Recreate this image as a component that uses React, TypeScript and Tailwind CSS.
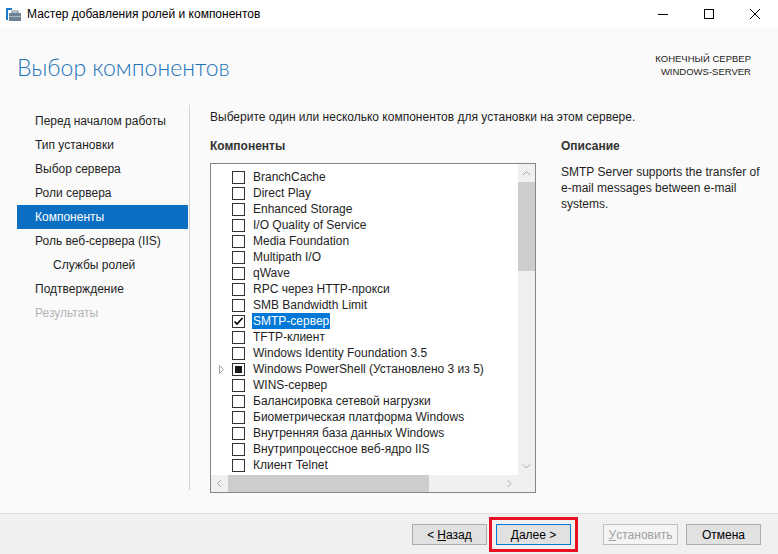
import React from "react";

type Item = {
  label: string;
  checked?: boolean;
  partial?: boolean;
  selected?: boolean;
  expandable?: boolean;
};

const items: Item[] = [
  { label: "BranchCache" },
  { label: "Direct Play" },
  { label: "Enhanced Storage" },
  { label: "I/O Quality of Service" },
  { label: "Media Foundation" },
  { label: "Multipath I/O" },
  { label: "qWave" },
  { label: "RPC через HTTP-прокси" },
  { label: "SMB Bandwidth Limit" },
  { label: "SMTP-сервер", checked: true, selected: true },
  { label: "TFTP-клиент" },
  { label: "Windows Identity Foundation 3.5" },
  { label: "Windows PowerShell (Установлено 3 из 5)", partial: true, expandable: true },
  { label: "WINS-сервер" },
  { label: "Балансировка сетевой нагрузки" },
  { label: "Биометрическая платформа Windows" },
  { label: "Внутренняя база данных Windows" },
  { label: "Внутрипроцессное веб-ядро IIS" },
  { label: "Клиент Telnet" },
];

const nav = [
  { label: "Перед началом работы" },
  { label: "Тип установки" },
  { label: "Выбор сервера" },
  { label: "Роли сервера" },
  { label: "Компоненты", active: true },
  { label: "Роль веб-сервера (IIS)" },
  { label: "Службы ролей", sub: true },
  { label: "Подтверждение" },
  { label: "Результаты", disabled: true },
];

function Chevron({ dir }: { dir: "up" | "down" | "left" | "right" }) {
  const d = {
    up: "M1 5 L4.5 1.5 L8 5",
    down: "M1 1.5 L4.5 5 L8 1.5",
    left: "M5 1 L1.5 4.5 L5 8",
    right: "M1.5 1 L5 4.5 L1.5 8",
  }[dir];
  const vert = dir === "up" || dir === "down";
  return (
    <svg width={vert ? 9 : 7} height={vert ? 7 : 9} viewBox={vert ? "0 0 9 7" : "0 0 7 9"}>
      <path d={d} fill="none" stroke="#a6a6a6" strokeWidth="1" />
    </svg>
  );
}

function CheckBox({ checked, partial }: { checked?: boolean; partial?: boolean }) {
  return (
    <div className="w-[13px] h-[13px] border border-[#333333] bg-white flex items-center justify-center shrink-0">
      {checked && (
        <svg width="11" height="11" viewBox="0 0 11 11">
          <path d="M1.5 5.5 L4 8 L9.5 2" fill="none" stroke="#000" strokeWidth="1.6" />
        </svg>
      )}
      {partial && <div className="w-[7px] h-[7px] bg-[#1a1a1a]" />}
    </div>
  );
}

function Btn({ children, focused, disabled }: { children: React.ReactNode; focused?: boolean; disabled?: boolean }) {
  return (
    <div
      className={`w-[75px] h-[21px] flex items-center justify-center text-[12px] border ${
        disabled
          ? "bg-[#f4f4f4] border-[#bfbfbf] text-[#a0a0a0]"
          : focused
          ? "bg-[#e1e1e1] border-[#0078d7] text-[#000]"
          : "bg-[#e1e1e1] border-[#adadad] text-[#000]"
      }`}
    >
      {children}
    </div>
  );
}

export default function App() {
  return (
    <div className="w-[778px] h-[554px] flex flex-col bg-[#fafafa] text-[#1e1e1e] font-['Liberation_Sans',Arial,sans-serif] overflow-hidden">
      {/* Title bar */}
      <div className="h-[28px] bg-white flex items-center shrink-0">
        <svg className="ml-[6px]" width="15" height="13" viewBox="0 0 15 13">
          <rect x="0" y="0" width="6" height="2" fill="#1a7bd0" />
          <rect x="0" y="0" width="2" height="12" fill="#1a7bd0" />
          <rect x="3" y="5" width="12" height="8" fill="#6f8194" />
          <rect x="6" y="3" width="6" height="2" fill="none" stroke="#6f8194" strokeWidth="1" />
          <rect x="3" y="8" width="12" height="1" fill="#a9b6c3" />
        </svg>
        <span className="ml-[6px] text-[12px] text-black">Мастер добавления ролей и компонентов</span>
        <div className="ml-auto flex items-center">
          <div className="w-[46px] h-[28px] flex items-center justify-center">
            <div className="w-[10px] h-[1px] bg-black" />
          </div>
          <div className="w-[46px] h-[28px] flex items-center justify-center">
            <div className="w-[10px] h-[10px] border border-black" />
          </div>
          <div className="w-[46px] h-[28px] flex items-center justify-center">
            <svg width="10" height="10" viewBox="0 0 10 10">
              <path d="M0 0 L10 10 M10 0 L0 10" stroke="#000" strokeWidth="1" />
            </svg>
          </div>
        </div>
      </div>

      {/* Header */}
      <div className="h-[77px] shrink-0 flex justify-between">
        <div className="pl-[17px] pt-[23px] text-[23px] leading-[32px] font-light text-[#1b74b9] font-['Lato',sans-serif]">
          Выбор компонентов
        </div>
        <div className="pr-[27px] pt-[24px] text-[9.5px] leading-[13px] text-right text-[#1e1e1e]">
          <div>КОНЕЧНЫЙ СЕРВЕР</div>
          <div>WINDOWS-SERVER</div>
        </div>
      </div>

      {/* Body */}
      <div className="flex-1 flex items-start">
        <div className="w-[190px] h-[385px] border-r border-[#d4d4d4] pt-[4px] shrink-0">
          {nav.map((n) => (
            <div
              key={n.label}
              className={`ml-[17px] w-[171px] h-[24px] flex items-center text-[12px] ${
                n.sub ? "pl-[36px]" : "pl-[18px]"
              } ${n.active ? "bg-[#0a6fc2] text-white" : n.disabled ? "text-[#b4b4b4]" : "text-[#1e1e1e]"}`}
            >
              {n.label}
            </div>
          ))}
        </div>

        <div className="pl-[20px] pt-[4px] text-[12px]">
          <div className="h-[16px] leading-[16px]">
            Выберите один или несколько компонентов для установки на этом сервере.
          </div>
          <div className="flex mt-[13px]">
            <div className="w-[326px]">
              <div className="h-[16px] leading-[16px] font-bold text-[#333]">Компоненты</div>
              <div className="mt-[9px] w-[326px] h-[330px] border border-[#828790] bg-white flex flex-col">
                <div className="flex-1 flex min-h-0">
                  <div className="flex-1 overflow-hidden pt-[5px]">
                    {items.map((it) => (
                      <div key={it.label} className="h-[16px] flex items-center">
                        <div className="w-[21px] h-[16px] flex items-center pl-[8px] shrink-0">
                          {it.expandable && (
                            <svg width="5" height="9" viewBox="0 0 5 9">
                              <path d="M0.5 0.5 L4.5 4.5 L0.5 8.5 Z" fill="none" stroke="#a0a0a0" strokeWidth="1" />
                            </svg>
                          )}
                        </div>
                        <CheckBox checked={it.checked} partial={it.partial} />
                        <span
                          className={`ml-[7px] px-[1px] h-[16px] leading-[16px] whitespace-nowrap ${
                            it.selected ? "bg-[#0078d7] text-white" : "text-[#1e1e1e]"
                          }`}
                        >
                          {it.label}
                        </span>
                      </div>
                    ))}
                  </div>
                  <div className="w-[17px] bg-[#f0f0f0] flex flex-col shrink-0">
                    <div className="h-[18px] flex items-center justify-center">
                      <Chevron dir="up" />
                    </div>
                    <div className="h-[89px] bg-[#cdcdcd]" />
                    <div className="flex-1" />
                    <div className="h-[17px] flex items-center justify-center">
                      <Chevron dir="down" />
                    </div>
                  </div>
                </div>
                <div className="h-[17px] flex shrink-0">
                  <div className="flex-1 bg-[#f0f0f0] flex">
                    <div className="w-[17px] flex items-center justify-center">
                      <Chevron dir="left" />
                    </div>
                    <div className="w-[201px] bg-[#cdcdcd]" />
                    <div className="flex-1" />
                    <div className="w-[17px] flex items-center justify-center">
                      <Chevron dir="right" />
                    </div>
                  </div>
                  <div className="w-[17px] bg-[#f0f0f0]" />
                </div>
              </div>
            </div>
            <div className="ml-[25px] w-[200px]">
              <div className="h-[16px] leading-[16px] font-bold text-[#333]">Описание</div>
              <div className="mt-[10px] leading-[16px] text-[#1e1e1e]">
                SMTP Server supports the transfer of
                <br />
                e-mail messages between e-mail
                <br />
                systems.
              </div>
            </div>
          </div>
        </div>
      </div>

      {/* Bottom bar */}
      <div className="h-[41px] shrink-0 bg-[#f0f0f0] border-t border-[#dfdfdf] flex items-start justify-end pt-[10px] pr-[17px]">
        <Btn>
          &lt; <span className="underline ml-[3px]">Н</span>азад
        </Btn>
        <div className="ml-[2px] mt-[-7px] border-[3px] border-[#e81123] p-[4px]">
          <Btn focused>
            <span className="underline">Д</span>алее &gt;
          </Btn>
        </div>
        <div className="ml-[25px]">
          <Btn disabled>
            <span className="underline">У</span>становить
          </Btn>
        </div>
        <div className="ml-[8px]">
          <Btn>Отмена</Btn>
        </div>
      </div>
    </div>
  );
}
